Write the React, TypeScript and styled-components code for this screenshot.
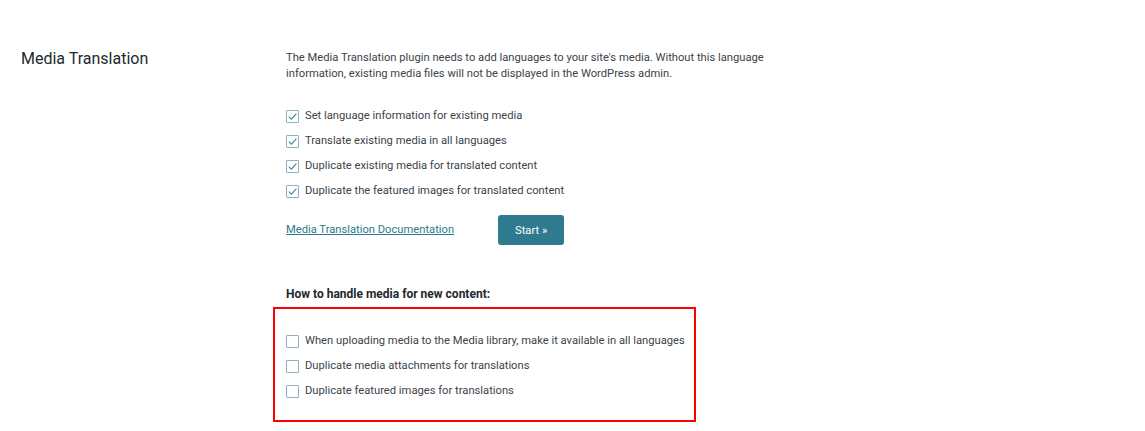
import React from "react";
import styled, { createGlobalStyle } from "styled-components";

const Global = createGlobalStyle`
  html, body { margin: 0; padding: 0; background: #fff; }
  body { font-family: Roboto, "Liberation Sans", sans-serif; color: #3c434a; }
`;

const Page = styled.div`
  display: grid;
  grid-template-columns: 265px 1fr;
  padding: 48px 0 0 21px;
`;

const Title = styled.h2`
  margin: 0;
  font-size: 16px;
  font-weight: 400;
  line-height: 21px;
  color: #23282d;
`;

const Content = styled.div`
  display: flex;
  flex-direction: column;
`;

const Intro = styled.p`
  margin: 2px 0 0;
  font-size: 11.2px;
  line-height: 16px;
  width: 490px;
  color: #3c434a;
`;

const List = styled.div`
  display: flex;
  flex-direction: column;
  gap: 9px;
  margin-top: 26px;
`;

const Row = styled.label`
  display: flex;
  align-items: center;
  gap: 6px;
  font-size: 11.2px;
  line-height: 16px;
  color: #3c434a;
`;

const Box = styled.span`
  width: 13px;
  height: 13px;
  box-sizing: border-box;
  border: 1px solid #8fb1c2;
  border-radius: 1px;
  background: #fff;
  display: inline-flex;
  align-items: center;
  justify-content: center;
  flex-shrink: 0;
`;

const Actions = styled.div`
  display: flex;
  align-items: center;
  gap: 44px;
  margin-top: 16px;
`;

const DocLink = styled.a`
  font-size: 11.2px;
  color: #2b7a8d;
  text-decoration: underline;
  line-height: 16px;
`;

const StartButton = styled.button`
  width: 66px;
  height: 30px;
  border: none;
  border-radius: 3px;
  background: #2e7b8f;
  color: #fff;
  font-family: Roboto, "Liberation Sans", sans-serif;
  font-size: 11.2px;
  padding: 0;
  cursor: pointer;
`;

const Subheading = styled.h3`
  margin: 41px 0 0;
  font-size: 12px;
  font-weight: 700;
  line-height: 16px;
  color: #23282d;
`;

const Highlight = styled.div`
  margin: 5px 0 0 -13px;
  width: 408px;
  border: 2px solid #f00;
  padding: 24px 0 21px 11px;
`;

const HighlightList = styled(List)`
  margin-top: 0;
`;

const Check = () => (
  <svg width="11" height="11" viewBox="0 0 11 11">
    <path d="M1.8 5.6 L4.4 8.2 L9.4 2.6" fill="none" stroke="#3a8aa0" strokeWidth="1.1" />
  </svg>
);

const existing = [
  "Set language information for existing media",
  "Translate existing media in all languages",
  "Duplicate existing media for translated content",
  "Duplicate the featured images for translated content",
];

const newContent = [
  "When uploading media to the Media library, make it available in all languages",
  "Duplicate media attachments for translations",
  "Duplicate featured images for translations",
];

export default function App() {
  return (
    <>
      <Global />
      <Page>
        <Title>Media Translation</Title>
        <Content>
          <Intro>
            The Media Translation plugin needs to add languages to your site's media. Without this language
            information, existing media files will not be displayed in the WordPress admin.
          </Intro>
          <List>
            {existing.map((t) => (
              <Row key={t}>
                <Box>
                  <Check />
                </Box>
                {t}
              </Row>
            ))}
          </List>
          <Actions>
            <DocLink href="#">Media Translation Documentation</DocLink>
            <StartButton>Start »</StartButton>
          </Actions>
          <Subheading>How to handle media for new content:</Subheading>
          <Highlight>
            <HighlightList>
              {newContent.map((t) => (
                <Row key={t}>
                  <Box />
                  {t}
                </Row>
              ))}
            </HighlightList>
          </Highlight>
        </Content>
      </Page>
    </>
  );
}
